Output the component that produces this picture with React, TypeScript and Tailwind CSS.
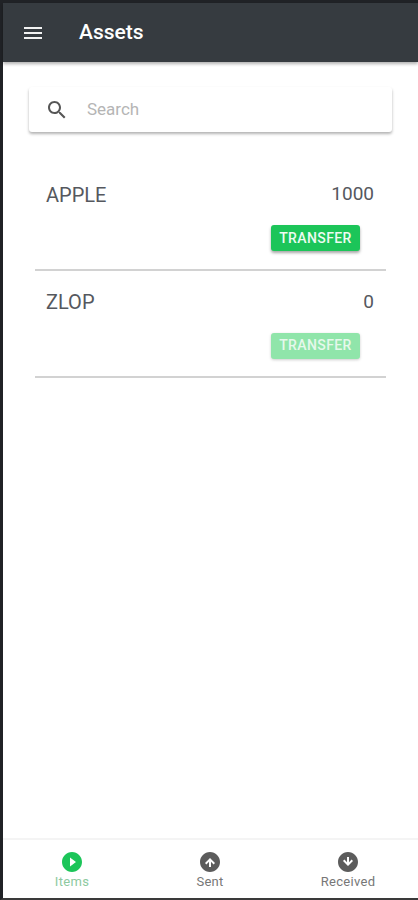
const font = { fontFamily: "Roboto, 'Liberation Sans', sans-serif" };

function Row({ name, value, disabled }: { name: string; value: string; disabled?: boolean }) {
  return (
    <div className="mx-[32px] flex h-[107.5px] flex-col border-b-2 border-[#d2d2d2] px-[11px]">
      <div className="mt-[19.5px] flex h-[24px] items-center justify-between text-[20px] text-[#55585e]">
        <span>{name}</span>
        <span className="mr-[1px] text-[19px]">{value}</span>
      </div>
      <div className="mt-[18.5px] flex justify-end pr-[15px]">
        <button
          className={
            disabled
              ? "flex h-[26px] w-[89px] items-center justify-center rounded-[3px] bg-[#90e5aa] text-[14px] font-medium tracking-[0.4px] text-[#e6f8ec] shadow-[0_1px_3px_rgba(0,0,0,0.2)]"
              : "flex h-[26px] w-[89px] items-center justify-center rounded-[3px] bg-[#1cc559] text-[14px] font-medium tracking-[0.4px] text-[#eefbf2] shadow-[0_2px_3px_rgba(0,0,0,0.35)]"
          }
        >
          TRANSFER
        </button>
      </div>
    </div>
  );
}

function Tab({ label, color, textColor, children, className }: { label: string; color: string; textColor: string; children: React.ReactNode; className: string }) {
  return (
    <div className={"flex flex-col items-center " + className}>
      <svg width="24" height="24" viewBox="0 0 24 24" fill={color} className="mt-[10px]">
        {children}
      </svg>
      <span className={"mt-[1px] text-[13px] leading-[14px] tracking-[0.3px] " + textColor}>{label}</span>
    </div>
  );
}

export default function App() {
  return (
    <div className="flex h-[900px] w-[418px] flex-col border-t-[3px] border-b-2 border-l-[3px] border-t-[#202226] border-b-[#3a3a3a] border-l-[#202226] bg-white" style={font}>
      <header className="flex h-[59px] shrink-0 items-center bg-[#363b40] shadow-[0_2px_3px_rgba(0,0,0,0.3)]">
        <svg width="24" height="24" viewBox="0 0 24 24" fill="#f2f2f2" className="ml-[18px]">
          <path d="M3 18h18v-2H3v2zm0-5h18v-2H3v2zm0-7v2h18V6H3z" />
        </svg>
        <h1 className="ml-[34px] text-[21px] font-medium text-white">Assets</h1>
      </header>
      <main className="flex-1">
        <div className="mx-[26px] mt-[25px] flex h-[45px] items-center rounded-[3px] bg-white shadow-[0_2px_3px_rgba(0,0,0,0.3)]">
          <svg width="24" height="24" viewBox="0 0 24 24" fill="#565656" className="ml-[16px]">
            <path d="M15.5 14h-.79l-.28-.27C15.41 12.59 16 11.11 16 9.5 16 5.91 13.09 3 9.5 3S3 5.91 3 9.5 5.91 16 9.5 16c1.61 0 3.09-.59 4.23-1.57l.27.28v.79l5 4.99L20.49 19l-4.99-5zm-6 0C7.01 14 5 11.99 5 9.5S7.01 5 9.5 5 14 7.01 14 9.5 11.99 14 9.5 14z" />
          </svg>
          <span className="ml-[18px] text-[17px] text-[#b5b5b5]">Search</span>
        </div>
        <div className="mt-[31px]">
          <Row name="APPLE" value="1000" />
          <Row name="ZLOP" value="0" disabled />
        </div>
      </main>
      <nav className="flex h-[60px] shrink-0 border-t-2 border-[#f4f4f4] bg-white">
        <Tab label="Items" color="#1cc559" textColor="text-[#8dc9a0]" className="w-[138px]">
          <path d="M12 2C6.48 2 2 6.48 2 12s4.48 10 10 10 10-4.48 10-10S17.52 2 12 2zm-2 14.5v-9l6 4.5-6 4.5z" />
        </Tab>
        <Tab label="Sent" color="#5c5c5c" textColor="text-[#777777]" className="w-[138px]">
          <path d="M12 2C6.48 2 2 6.48 2 12s4.48 10 10 10 10-4.48 10-10S17.52 2 12 2zm1 15h-2V11.8l-2.6 2.6L7 13l5-5 5 5-1.4 1.4-2.6-2.6V17z" />
        </Tab>
        <Tab label="Received" color="#5c5c5c" textColor="text-[#777777]" className="w-[138px]">
          <path d="M12 2C6.48 2 2 6.48 2 12s4.48 10 10 10 10-4.48 10-10S17.52 2 12 2zm-1 5h2v5.2l2.6-2.6L17 11l-5 5-5-5 1.4-1.4 2.6 2.6V7z" />
        </Tab>
      </nav>
    </div>
  );
}
